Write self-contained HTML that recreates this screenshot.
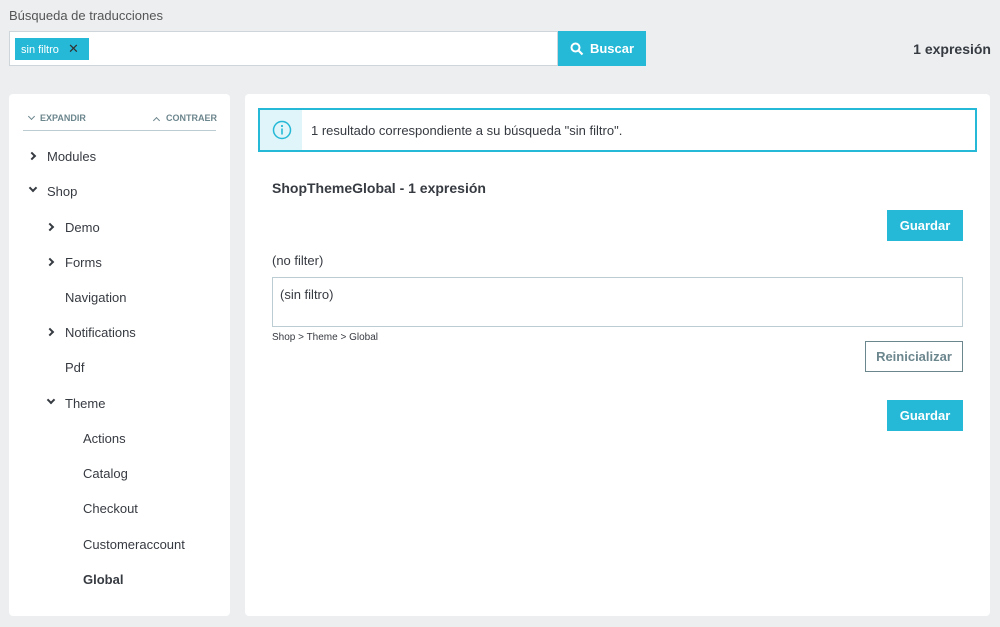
<!DOCTYPE html>
<html><head><meta charset="utf-8"><style>
*{box-sizing:border-box;margin:0;padding:0}
body{width:1000px;height:627px;background:#eceef0;font-family:"Liberation Sans","DejaVu Sans",sans-serif;color:#363a41;position:relative;overflow:hidden;font-size:13px}
.a{position:absolute}
.btn{background:#25b9d7;color:#fff;font-weight:bold;font-size:13px;display:flex;align-items:center;justify-content:center}
.tree div{position:absolute;font-size:13px;color:#363a41}
.chev{position:absolute;width:6px;height:6px;border-right:2px solid #363a41;border-bottom:2px solid #363a41}
.sc{position:absolute;width:5px;height:5px;border-right:1.5px solid #6c868e;border-bottom:1.5px solid #6c868e}
</style></head><body>
<div class="a" style="left:9px;top:8px;font-size:13px;color:#555">Búsqueda de traducciones</div>
<div class="a" style="left:9px;top:31px;width:549px;height:35px;background:#fff;border:1px solid #cfd6db"></div>
<div class="a" style="left:15px;top:38px;width:74px;height:22px;background:#25b9d7;color:#fff;font-size:11px;line-height:22px;padding-left:6px">sin filtro <span style="margin-left:6px;font-size:13px;color:#333">✕</span></div>
<div class="a btn" style="left:558px;top:31px;width:88px;height:35px">
<svg width="14" height="14" viewBox="0 0 14 14" style="margin-right:6px"><circle cx="5.5" cy="5.5" r="4" fill="none" stroke="#fff" stroke-width="2"/><path d="M8.5 8.5L12.5 12.5" stroke="#fff" stroke-width="2.2"/></svg>Buscar</div>
<div class="a" style="right:9px;top:41px;font-size:14px;font-weight:bold;color:#363a41">1 expresión</div>

<div class="a" style="left:9px;top:94px;width:221px;height:522px;background:#fff;border-radius:4px"></div>
<span class="sc" style="left:29px;top:114px;transform:rotate(45deg)"></span>
<div class="a" style="left:40px;top:113px;font-size:9px;font-weight:bold;color:#6c868e">EXPANDIR</div>
<span class="sc" style="left:154px;top:118px;transform:rotate(225deg)"></span>
<div class="a" style="left:166px;top:113px;font-size:9px;font-weight:bold;color:#6c868e">CONTRAER</div>
<div class="a" style="left:23px;top:130px;width:193px;height:1px;background:#bbcdd2"></div>
<div class="tree">
<span class="chev" style="left:29px;top:153px;transform:rotate(-45deg)"></span><div style="left:47px;top:149px">Modules</div>
<span class="chev" style="left:30px;top:185px;transform:rotate(45deg)"></span><div style="left:47px;top:184px">Shop</div>
<span class="chev" style="left:47px;top:224px;transform:rotate(-45deg)"></span><div style="left:65px;top:220px">Demo</div>
<span class="chev" style="left:47px;top:259px;transform:rotate(-45deg)"></span><div style="left:65px;top:255px">Forms</div>
<div style="left:65px;top:290px">Navigation</div>
<span class="chev" style="left:47px;top:329px;transform:rotate(-45deg)"></span><div style="left:65px;top:325px">Notifications</div>
<div style="left:65px;top:360px">Pdf</div>
<span class="chev" style="left:48px;top:397px;transform:rotate(45deg)"></span><div style="left:65px;top:396px">Theme</div>
<div style="left:83px;top:431px">Actions</div>
<div style="left:83px;top:466px">Catalog</div>
<div style="left:83px;top:501px">Checkout</div>
<div style="left:83px;top:537px">Customeraccount</div>
<div style="left:83px;top:572px;font-weight:bold">Global</div>
</div>

<div class="a" style="left:245px;top:94px;width:745px;height:522px;background:#fff;border-radius:4px"></div>
<div class="a" style="left:258px;top:108px;width:719px;height:44px;border:2px solid #25b9d7;background:#fff"></div>
<div class="a" style="left:260px;top:110px;width:42px;height:40px;background:#dff5f9"></div>
<svg class="a" style="left:272px;top:120px" width="20" height="20" viewBox="0 0 20 20"><circle cx="10" cy="10" r="8.5" fill="none" stroke="#25b9d7" stroke-width="1.5"/><circle cx="10" cy="6" r="1.1" fill="#25b9d7"/><path d="M10 8.5V14.5" stroke="#25b9d7" stroke-width="1.6"/></svg>
<div class="a" style="left:311px;top:123px;font-size:13px">1 resultado correspondiente a su búsqueda "sin filtro".</div>
<div class="a" style="left:272px;top:180px;font-size:14px;font-weight:bold">ShopThemeGlobal - 1 expresión</div>
<div class="a btn" style="left:887px;top:210px;width:76px;height:31px">Guardar</div>
<div class="a" style="left:272px;top:253px">(no filter)</div>
<div class="a" style="left:272px;top:277px;width:691px;height:50px;border:1px solid #bbcdd2;padding:9px 7px">(sin filtro)</div>
<div class="a" style="left:272px;top:332px;font-size:10px">Shop &gt; Theme &gt; Global</div>
<div class="a" style="left:865px;top:341px;width:98px;height:31px;border:1px solid #6c868e;color:#6c868e;font-weight:bold;display:flex;align-items:center;justify-content:center">Reinicializar</div>
<div class="a btn" style="left:887px;top:400px;width:76px;height:31px">Guardar</div>
</body></html>
